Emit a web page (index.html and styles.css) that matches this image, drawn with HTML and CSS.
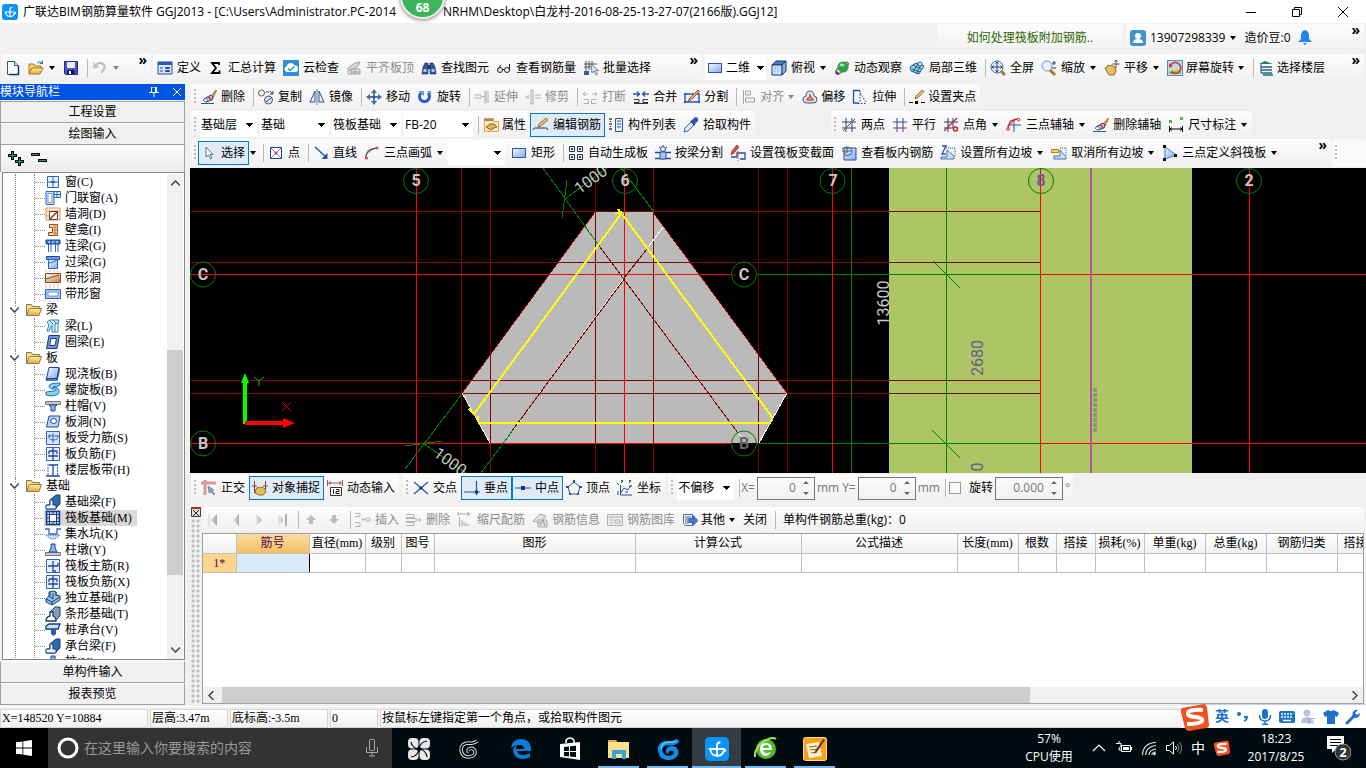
FILE: index.html
```html
<!DOCTYPE html>
<html lang="zh-CN">
	<head>
		<meta charset="UTF-8">
		<meta name="viewport" content="width=device-width, initial-scale=1.0">
		<title>广联达BIM钢筋算量软件 GGJ2013</title>
		<link rel="stylesheet" href="styles.css">
	</head>
	<body>

		<!-- icon sprite -->
		<svg class="sprite" aria-hidden="true">
			<defs>
				<linearGradient id="gBlue" x1="0" y1="0" x2="1" y2="1"><stop offset="0" stop-color="#f4f9ff"/><stop offset="1" stop-color="#7fa8ee"/></linearGradient>
				<linearGradient id="gFolder" x1="0" y1="0" x2="0" y2="1"><stop offset="0" stop-color="#fff0b0"/><stop offset="1" stop-color="#e9a92c"/></linearGradient>
				<linearGradient id="gBrown" x1="0" y1="0" x2="1" y2="1"><stop offset="0" stop-color="#fff"/><stop offset="1" stop-color="#c47a3c"/></linearGradient>
				<linearGradient id="gGrey" x1="0" y1="0" x2="1" y2="0"><stop offset="0" stop-color="#e8e8e8"/><stop offset="1" stop-color="#a8a8a8"/></linearGradient>
			</defs>

			<symbol id="logo" viewBox="0 0 16 16"><rect width="16" height="16" rx="3" fill="#0b93f5"/><path d="M8 12.500V5.500q0-2 2.300-2M2.500 8h9.500q2 0 1.200 2M3.500 8q.5 4.500 4.500 4.500t4.500-3.500" fill="none" stroke="#fff" stroke-width="1.200"/></symbol>
			<symbol id="new" viewBox="0 0 16 16"><path d="M2.500 1.500h7l4 4v9h-11z" fill="#fff" stroke="#2b5797"/><path d="M9.500 1.500v4h4" fill="#cfe0fb" stroke="#2b5797"/><path d="M13.500 6v8.500H4" fill="none" stroke="#12365f" stroke-width="1.500"/></symbol>
			<symbol id="open" viewBox="0 0 16 16"><path d="M1 14V4h5l1 2h6v3" fill="#f7d36f" stroke="#a8741c"/><path d="M1 14l3-6h11l-3 6z" fill="url(#gFolder)" stroke="#a8741c"/><path d="M9 3q3-3 5 0M14.500 .5v3h-3" fill="none" stroke="#3b6ea5"/></symbol>
			<symbol id="save" viewBox="0 0 16 16"><path d="M1.500 1.500h13v13h-12l-1-1z" fill="#4a55c8" stroke="#232a86"/><path d="M4 2h8v6H4z" fill="#e9edff"/><path d="M4.500 10h7v4h-7z" fill="#16184a"/><path d="M6 11h2v3H6z" fill="#fff"/></symbol>
			<symbol id="undo" viewBox="0 0 16 16"><path d="M3 6q4-5 8-2t-2 9" fill="none" stroke="#bdbdbd" stroke-width="2.200"/><path d="M1 2l.5 7 6-2z" fill="#c4c4c4"/></symbol>
			<symbol id="define" viewBox="0 0 16 16"><path d="M1 2h14v12H1z" fill="#dce8fb" stroke="#274b9b"/><path d="M1 2h14v3H1z" fill="#2c55b5"/><path d="M3 8h3M3 11h3M8.500 7.500h4v1h-4zM8.500 10.500h4v1h-4z" fill="none" stroke="#274b9b"/></symbol>
			<symbol id="sigma" viewBox="0 0 16 16"><path d="M11 5V3H4l4 5-4 5h7.500v-2.500" fill="none" stroke="#000" stroke-width="1.800"/></symbol>
			<symbol id="cloud" viewBox="0 0 16 16"><rect width="16" height="16" rx="1" fill="#2d8fd6"/><path d="M4 12a3 3 0 0 1-.3-5.800 4 4 0 0 1 7.500-1A3.400 3.400 0 0 1 12 12z" fill="#fff"/><path d="M5 8.500l2.300 2 4-4" fill="none" stroke="#2d8fd6" stroke-width="1.500"/></symbol>
			<symbol id="level" viewBox="0 0 16 16"><path d="M2 8l7-5 5-1-2 4-8 5z" fill="#d8d8d8" stroke="#a2a2a2"/><path d="M2 14V9m3 5V9h9v5H2m3-2h9M9 9v5" fill="#dadada" stroke="#a2a2a2"/></symbol>
			<symbol id="find" viewBox="0 0 16 16"><path d="M1 14l1-7 2-4h3v11zM9 14V3h3l2 4 1 7z" fill="#2e5596" stroke="#17305f" stroke-width=".6"/><path d="M7 5h2v4H7z" fill="#17305f"/><path d="M2.500 9h3v3h-3zM10.500 9h3v3h-3z" fill="#a9c7f2"/></symbol>
			<symbol id="glasses" viewBox="0 0 16 16"><circle cx="4" cy="10" r="2.500" fill="none" stroke="#222"/><circle cx="11" cy="10" r="2.500" fill="none" stroke="#222"/><path d="M6.500 9.500h2M2 9l3-4M13.500 10V4" fill="none" stroke="#222"/></symbol>
			<symbol id="batch" viewBox="0 0 16 16"><path d="M3 1v14M6 1v9M9 1v4M1 4h13M1 7h7" fill="none" stroke="#555"/><path d="M1 11h5v4H1z" fill="#2d5bb5"/><path d="M8 4l1 9 2-2 2 4 1.500-1-2-3.500h3z" fill="#d9e5fa" stroke="#44597f" stroke-width=".7"/></symbol>
			<symbol id="rect" viewBox="0 0 16 16"><rect x="1.500" y="3.500" width="13" height="9" fill="url(#gBlue)" stroke="#3456a4"/></symbol>
			<symbol id="cube" viewBox="0 0 16 16"><path d="M1 5l4-4h10l-4 4z" fill="#4d7fbf" stroke="#123b66"/><path d="M1 5h10v10H1z" fill="#dbe9fb" stroke="#123b66"/><path d="M11 5l4-4v10l-4 4z" fill="#8db1de" stroke="#123b66"/><path d="M4 5v10M7 5v10M1 8h10M1 11h10" stroke="#86aee0" stroke-width=".6"/></symbol>
			<symbol id="orbit" viewBox="0 0 16 16"><ellipse cx="8" cy="8" rx="8" ry="3" transform="rotate(-42 8 8)" fill="none" stroke="#c23b2b"/><circle cx="9" cy="7" r="5.500" fill="#2fa04e"/><ellipse cx="8" cy="5" rx="2.500" ry="1.600" fill="#a5e6b5"/><path d="M1 12l2 3 3-1-3-3z" fill="#2a52a3"/></symbol>
			<symbol id="local3d" viewBox="0 0 16 16"><path d="M1 7l6-4 8 3-5 8-8-3z" fill="#9ccbe6" stroke="#1d5c86"/><path d="M4 5l8 4M3 9l8 3M9 4l-5 8M12 5l-5 9" fill="none" stroke="#1d5c86"/><circle cx="11" cy="4" r="2" fill="#dff1fb" stroke="#1d5c86"/></symbol>
			<symbol id="full" viewBox="0 0 16 16"><path d="M11 11l4 4" stroke="#b07727" stroke-width="3"/><circle cx="7" cy="7" r="6" fill="#e6effb" stroke="#3b5f9b"/><path d="M7 2v10M2 7h10M5.500 3.500L7 2l1.500 1.500M5.500 10.500L7 12l1.500-1.500M3.500 5.500L2 7l1.500 1.500M10.500 5.500L12 7l-1.500 1.500" fill="none" stroke="#24417a"/></symbol>
			<symbol id="zoom" viewBox="0 0 16 16"><path d="M9 10l5 5" stroke="#b07727" stroke-width="3"/><circle cx="6" cy="6" r="5" fill="#e9f2fc" stroke="#7b94b8"/><path d="M11 3h4M13 1v4M11 8h4" stroke="#24417a"/></symbol>
			<symbol id="pan" viewBox="0 0 16 16"><path d="M1 8l2-1 1-2 2 1 2-1 1 1.500 2 .5 1 4-2 4H5z" fill="#eabf62" stroke="#8c6a25"/><path d="M12 0v8M8.500 4h7M10.500 1.500L12 0l1.500 1.500" fill="none" stroke="#555"/></symbol>
			<symbol id="screenrot" viewBox="0 0 16 16"><rect x=".5" y=".5" width="15" height="15" fill="#b9def2" stroke="#4c94bd"/><path d="M2 12q4-5 12-1v3H2z" fill="#8dc653"/><path d="M3 6q4-6 9-2 4 5-1 9-4 1-7-1" fill="none" stroke="#e0312b" stroke-width="1.600"/><path d="M2 8V3l4 3z" fill="#e0312b"/><path d="M6 8h4v3H6z" fill="#f3d65f"/></symbol>
			<symbol id="floor" viewBox="0 0 16 16"><path d="M1 4l6-3 8 3z" fill="#2c7f5e"/><path d="M3 7h11M3 10h11M3 13h11M5 15h10" stroke="#1d6f84" stroke-width="1.500"/><path d="M3 4v9" stroke="#24417a"/></symbol>

			<symbol id="erase" viewBox="0 0 16 16"><path d="M0 14.500h13" stroke="#1f5f7a"/><path d="M15 1l-5 6 2 2 3.500-7z" fill="#e0a54b" stroke="#8a5a1a" stroke-width=".7"/><path d="M10 6L3 10l2 3 6-2 1-3z" fill="#b8cbe9" stroke="#24417a"/><path d="M5 9l-3 2 2 2 3-1z" fill="#fff" stroke="#24417a" stroke-width=".7"/><path d="M7 7l3 4" stroke="#c23b2b" stroke-width="1.500"/></symbol>
			<symbol id="copy" viewBox="0 0 16 16"><circle cx="3.500" cy="4" r="3" fill="#fff" stroke="#555"/><circle cx="10.500" cy="11" r="4" fill="#dfe4ea" stroke="#555"/><path d="M8 13l5-4M8 3h3M12 2l3 3v-3M15 5h-3" fill="none" stroke="#24417a"/></symbol>
			<symbol id="mirror" viewBox="0 0 16 16"><path d="M6 2v11H1zM10 2v11h5z" fill="#eef4ff" stroke="#24519d"/><path d="M8 0v16" stroke="#777"/></symbol>
			<symbol id="move" viewBox="0 0 16 16"><path d="M8 2v12M2 8h12" stroke="#24417a" stroke-width="1.400"/><path d="M8 0L5 4h6zM8 16l-3-4h6zM0 8l4-3v6zM16 8l-4-3v6z" fill="#4a6aa5"/></symbol>
			<symbol id="rotate" viewBox="0 0 16 16"><path d="M4 4a5 5 0 1 0 7 0" fill="none" stroke="#2d5fc4" stroke-width="3"/><path d="M1 2h6v5zM10 2h4v4z" fill="#6d98e6"/></symbol>
			<symbol id="extend" viewBox="0 0 16 16"><path d="M0 6h7v3H0M8 7.500h3M11 2h1v12h-1zM14 2v12" fill="none" stroke="#b0b0b0"/></symbol>
			<symbol id="trim" viewBox="0 0 16 16"><path d="M0 8h4M10 6h6M10 9h6M6 1h2v14H6zM3 6v4" fill="none" stroke="#b0b0b0"/></symbol>
			<symbol id="break" viewBox="0 0 16 16"><path d="M1 5h5M10 5h5M3 3L1 5l2 2M13 3l2 2-2 2M1.500 10.500h5v4h-5M14.500 10.500h-5v4h5" fill="none" stroke="#b0b0b0"/></symbol>
			<symbol id="merge" viewBox="0 0 16 16"><path d="M0 5h6M10 5h6M4 2.500L6.500 5 4 7.500M12 2.500L9.500 5 12 7.500" fill="none" stroke="#2850c0" stroke-width="1.300"/><path d="M1 10.500h5v3H1M15 10.500h-5v3h5M1 14.500h14" fill="none" stroke="#333"/></symbol>
			<symbol id="split" viewBox="0 0 16 16"><path d="M1 5h14v8H1z" fill="#e9f0ff" stroke="#2850c0" stroke-width="1.400"/><path d="M0 4h2v2H0zM0 12h2v2H0zM14 12h2v2h-2z" fill="#2850c0"/><path d="M4 12l2-3 8-8 1.500 1.500-8 8z" fill="#e8b35a" stroke="#8a2f1a" stroke-width=".8"/></symbol>
			<symbol id="align" viewBox="0 0 16 16"><path d="M2.500 1v14M4.500 2h5v4h-5zM4.500 9h9v4h-9z" fill="#eee" stroke="#a5a5a5"/></symbol>
			<symbol id="offset" viewBox="0 0 16 16"><path d="M1 11q0-4 3-4 0-5 4-5t4 5q3 0 3 4 0 3-4 3H5q-4 0-4-3z" fill="#dce5f2" stroke="#3c587d"/><path d="M5 11q0-2 2-2l1-3 1 3q2 0 2 2z" fill="#fff" stroke="#d34a35" stroke-width="1.300"/></symbol>
			<symbol id="stretch" viewBox="0 0 16 16"><path d="M8 1.500H1.500v12.500h5" fill="none" stroke="#24519d" stroke-width="1.300"/><path d="M8 2v12M6 14.500h9M8 4l6 9" fill="none" stroke="#24417a" stroke-dasharray="1.500 1.500"/></symbol>
			<symbol id="grippt" viewBox="0 0 16 16"><path d="M0 13.500h4M12 13.500h4" stroke="#000"/><path d="M6 12h3v3H6z"/><path d="M6 10l1-3 6-6 2 1.500-6 6z" fill="#e8c074" stroke="#7a5a22" stroke-width=".8"/></symbol>

			<symbol id="prop" viewBox="0 0 16 16"><path d="M1.500 1.500h9v3h5v10h-14z" fill="#ffe9bd" stroke="#f0983a"/><path d="M1 2h9v2H1z" fill="#8a8a8a"/><path d="M3 10l4-3 4 0 3 3-3 1-3 2z" fill="#e0b84e" stroke="#5f4b18" stroke-width=".8"/></symbol>
			<symbol id="editbar" viewBox="0 0 16 16"><path d="M0 13q1-3 3-2h9q2-1 3 2" fill="none" stroke="#333"/><path d="M5 10l1-3 7-6 2 2-7 6z" fill="#e8c074" stroke="#7a5a22" stroke-width=".8"/></symbol>
			<symbol id="list" viewBox="0 0 16 16"><path d="M1 2h3M1 7h3M1 12h3M2.500 4v1M2.500 9v1" stroke="#444" stroke-width="1.500"/><path d="M7.500 1.500h7v13h-7z" fill="#e6effd" stroke="#2b5797"/><path d="M9 4h4M9 7h4M9 10h4" stroke="#2b5797"/></symbol>
			<symbol id="pick" viewBox="0 0 16 16"><path d="M1 15l1-4 6-6 3 3-6 6z" fill="#dfeaf8" stroke="#355d94"/><path d="M7 4l2-1 3-3q4 0 3 4l-3 3 0 2z" fill="#2a5cae"/></symbol>
			<symbol id="twopt" viewBox="0 0 16 16"><path d="M5 1v14M11 1v14M1 5h14M1 11h14" stroke="#24417a"/><path d="M2 14L14 2" stroke="#b02a2a"/><path d="M4 10h2v2H4zM10 4h2v2h-2z" fill="#3d9b3d"/></symbol>
			<symbol id="parallel" viewBox="0 0 16 16"><path d="M5 1v14M11 1v14M1 5h14" stroke="#24519d"/><path d="M1 11h14" stroke="#b02a2a"/></symbol>
			<symbol id="ptangle" viewBox="0 0 16 16"><path d="M5 1v14M10 1v10M1 5h14M1 11h10" stroke="#24417a"/><path d="M1 14L14 1" stroke="#d02020" stroke-width="1.300"/><circle cx="12.500" cy="12" r="2" fill="none" stroke="#d02020" stroke-width="1.500"/></symbol>
			<symbol id="threeaxis" viewBox="0 0 16 16"><path d="M8 3v12M3 8h12" stroke="#24519d"/><path d="M2 12q0-9 10-10" fill="none" stroke="#d02020" stroke-width="1.300"/><circle cx="2" cy="12" r="1.300" fill="#fff" stroke="#d02020"/><circle cx="12.500" cy="2.500" r="1.300" fill="#fff" stroke="#d02020"/><circle cx="5" cy="5" r="1.300" fill="#fff" stroke="#d02020"/></symbol>
			<symbol id="dim" viewBox="0 0 16 16"><path d="M1 3h3v3H1zM12 0h3v3h-3z" fill="#49b856"/><path d="M1.500 9v6M14.500 9v6M2 12h12M4 10.500L2 12l2 1.500M12 10.500l2 1.500-2 1.500" fill="none" stroke="#000"/></symbol>

			<symbol id="arrowsel" viewBox="0 0 16 16"><path d="M5 2v10l2.500-2 2 4 1.500-1-2-3.500h3z" fill="#fff" stroke="#5b6f8d"/></symbol>
			<symbol id="point" viewBox="0 0 16 16"><path d="M2.500 2.500h11v11h-11z" fill="#fff" stroke="#24417a"/><path d="M3 3l10 10M13 3L3 13" stroke="#6a86c8"/><circle cx="8" cy="8" r="1.500" fill="#d33"/></symbol>
			<symbol id="line" viewBox="0 0 16 16"><path d="M2 2l11 10" stroke="#24519d" stroke-width="1.400"/><path d="M14.500 8v6H8.500z" fill="#24519d"/></symbol>
			<symbol id="arc" viewBox="0 0 16 16"><path d="M2 14Q1 4 14 3" fill="none" stroke="#24519d" stroke-width="1.300"/><circle cx="2.500" cy="13" r="1.500" fill="#d5533c"/><circle cx="5" cy="6" r="1.500" fill="#d5533c"/><circle cx="13" cy="3" r="1.500" fill="#d5533c"/></symbol>
			<symbol id="autoslab" viewBox="0 0 16 16"><path d="M1.500 1.500h5v5h-5zM9.500 1.500h5v5h-5zM1.500 9.500h5v5h-5zM9.500 9.500h5v5h-5z" fill="#dfeaff" stroke="#333"/><path d="M3 3h2v2H3zM11 3h2v2h-2zM3 11h2v2H3zM11 11h2v2h-2z" fill="#24519d"/></symbol>
			<symbol id="beamsplit" viewBox="0 0 16 16"><path d="M0 7.500h16M0 13.500h16" stroke="#24519d" stroke-width="1.500"/><path d="M5 7h6v7H5z" fill="#a9c5f2" stroke="#24519d"/><circle cx="8" cy="4" r="2.500" fill="#e6effd" stroke="#24519d"/><path d="M8 0v1M4 2l1 1M12 2l-1 1" stroke="#24519d"/></symbol>
			<symbol id="section" viewBox="0 0 16 16"><path d="M1 12h6V8h8v6h-5" fill="#eef3ff" stroke="#24519d" stroke-width="1.300"/><path d="M1 10l1-4 5-6 2 2-5 6z" fill="#dd5540" stroke="#7c1f12" stroke-width=".7"/><path d="M8 6v10" stroke="#d33" stroke-dasharray="2 1"/></symbol>
			<symbol id="viewbar" viewBox="0 0 16 16"><path d="M3 3h12v12H3z" fill="url(#gBlue)" stroke="#24519d"/><path d="M1 4q6-4 9 0t-2 6-4-3M6 2v6M1 6h9" fill="none" stroke="#3c587d"/></symbol>
			<symbol id="slope" viewBox="0 0 16 16"><path d="M2 1h4L2 9h4" fill="none" stroke="#24519d" stroke-width="1.300"/><path d="M6 3h9v8" fill="none" stroke="#24519d" stroke-dasharray="1 1"/><path d="M7 5l7 6v3H1v-2h6z" fill="#cfe0fb" stroke="#24519d" stroke-width=".8"/></symbol>
			<symbol id="slopeoff" viewBox="0 0 16 16"><path d="M.5 4.500h7v3h-7z" fill="#f6d64c" stroke="#a8861c"/><path d="M9 3h6v8" fill="none" stroke="#24519d" stroke-dasharray="1 1"/><path d="M9 5l6 7v2H3v-3h6z" fill="#cfe0fb" stroke="#24519d" stroke-width=".8"/></symbol>
			<symbol id="tiltraft" viewBox="0 0 16 16"><path d="M3 2v12l11-4z" fill="url(#gBlue)" stroke="#3f74d1"/><path d="M1 0h3v3H1zM1 13h3v3H1zM12 9h3v3h-3z" fill="#111"/></symbol>

			<symbol id="ortho" viewBox="0 0 16 16"><path d="M0 3h15M4 0v15" stroke="#d79a9a" stroke-width="3"/><path d="M7 6l6 4-2 1 3 3-1 1-3-3-2 1z" fill="#8ca0b8" stroke="#5f7288" stroke-width=".6"/></symbol>
			<symbol id="osnap" viewBox="0 0 16 16"><path d="M2.500 1v12M13.500 1v8M0 6h5M11 6h5" stroke="#8b3a3a"/><path d="M4 9l2-2 2 1 2-1 3 2 1 3-3 3H7l-4-2z" fill="#e7bd62" stroke="#8c6a25"/></symbol>
			<symbol id="dyn" viewBox="0 0 16 16"><path d="M.5 0v6M15.500 0v6M1 3h14M3 1v4M13 1v4" stroke="#9b5a5a"/><path d="M3.500 7.500h11v8h-11z" fill="#fff" stroke="#333"/><path d="M6.500 9v5M9 9.500h3v2H9v2h3.500" fill="none" stroke="#222"/></symbol>
			<symbol id="cross" viewBox="0 0 16 16"><path d="M1 2l14 12M15 2L1 14" stroke="#24519d" stroke-width="1.200"/><path d="M6.500 6.500h3v3h-3z" fill="#113a86"/></symbol>
			<symbol id="perp" viewBox="0 0 16 16"><path d="M0 12h16M12.500 1v14" stroke="#24519d" stroke-width="1.200"/><path d="M11 10.500h3v3h-3z" fill="#113a86"/></symbol>
			<symbol id="mid" viewBox="0 0 16 16"><path d="M0 8h16" stroke="#24519d"/><path d="M6 6h4v4H6z" fill="#113a86"/></symbol>
			<symbol id="vertex" viewBox="0 0 16 16"><path d="M8 2l6 5-2 7H4L2 7z" fill="none" stroke="#24519d"/><path d="M7 0h2v3H7zM0 6h3v2H0zM13 6h3v2h-3zM3 13h2v2H3zM11 13h2v2h-2z" fill="#24519d"/></symbol>
			<symbol id="coord" viewBox="0 0 16 16"><path d="M3.500 5v10H15M3 14l4-6 4 2 3-5" fill="none" stroke="#24519d"/><path d="M0 3l2 2M4 0l2 2M6 0L4 3M12 0l2 2M14 0l-2 3M1 11v4M12 6h3M8 12h3" stroke="#333" stroke-width=".9"/></symbol>

			<symbol id="first" viewBox="0 0 16 16"><path d="M3 2h2v12H3zM12 2v12L6 8z" fill="url(#gGrey)"/></symbol>
			<symbol id="prev" viewBox="0 0 16 16"><path d="M11 2v12L5 8z" fill="url(#gGrey)"/></symbol>
			<symbol id="next" viewBox="0 0 16 16"><path d="M5 2v12l6-6z" fill="url(#gGrey)"/></symbol>
			<symbol id="last" viewBox="0 0 16 16"><path d="M11 2h2v12h-2zM4 2v12l6-6z" fill="url(#gGrey)"/></symbol>
			<symbol id="up" viewBox="0 0 16 16"><path d="M8 3l5 5h-3v4H6V8H3z" fill="#bdbdbd"/></symbol>
			<symbol id="down" viewBox="0 0 16 16"><path d="M8 12L3 7h3V3h4v4h3z" fill="#bdbdbd"/></symbol>
			<symbol id="insrow" viewBox="0 0 16 16"><path d="M0 1.500h5v3H0M0 10.500h5v4H0M7 7.500h4M9 5.500l-2 2 2 2M11 6h4v3h-4z" fill="none" stroke="#b5b5b5"/></symbol>
			<symbol id="delrow" viewBox="0 0 16 16"><path d="M0 2.500h8v3H0M0 6.500h10v3H0M0 10.500h8v3H0M10 8h5M13 6l2 2-2 2" fill="none" stroke="#b5b5b5"/></symbol>
			<symbol id="scale" viewBox="0 0 16 16"><path d="M1 2h11M1 0v4M10 0l3 2-3 2M2.500 5v10M5 8v6M7 10v4M9 11v3M11 12v2" fill="none" stroke="#aaa"/></symbol>
			<symbol id="info" viewBox="0 0 16 16"><path d="M1 9l7-7 6 2-6 7zM6 8h9v7H6z" fill="#e2e2e2" stroke="#aaa"/><path d="M8 14l3-6 2 6" fill="none" stroke="#999"/></symbol>
			<symbol id="lib" viewBox="0 0 16 16"><path d="M.5 2.500h15v11H.5zM.5 5h15" fill="#ececec" stroke="#b0b0b0"/><path d="M3 8h3M8 8h5v3H8zM3 11h3" fill="none" stroke="#b0b0b0"/></symbol>
			<symbol id="other" viewBox="0 0 16 16"><path d="M1.500 2.500h9v11h-7l-2-2z" fill="#edf3fd" stroke="#54698c"/><path d="M3 5h6M3 7h5M3 9h4M3 11h4" stroke="#54698c"/><path d="M7 6.500h4V3.500l5 5-5 5v-3H7z" fill="#3e7be0" stroke="#1f4ca0" stroke-width=".7"/></symbol>

			<symbol id="folder" viewBox="0 0 16 16"><path d="M.5 13.500v-11h5l1 2h7v3" fill="#f6dc8b" stroke="#8c7a4a"/><path d="M.5 13.500l3-7h12l-2.500 7z" fill="url(#gFolder)" stroke="#8c7a4a"/></symbol>
			<symbol id="t-window" viewBox="0 0 16 16"><path d="M2.500 2.500h11v11h-11z" fill="#e6f0ff" stroke="#2f63c0"/><path d="M8 2v12M2 8h12" stroke="#2f63c0"/><path d="M6 7h4v2H6z" fill="#2f63c0"/></symbol>
			<symbol id="t-doorwin" viewBox="0 0 16 16"><path d="M1 1.500h8v13H1z" fill="#cfe0fb" stroke="#2f63c0"/><path d="M3 3.500h4v9H3z" fill="#fff" stroke="#6d98e6"/><path d="M9 1.500h6.500v6H9zM12 2v6M9 4.500h6" fill="#e6f0ff" stroke="#2f63c0"/></symbol>
			<symbol id="t-wallhole" viewBox="0 0 16 16"><path d="M1 2h14v12H1z" fill="#fdf0e4" stroke="#e2935a"/><path d="M1 5h14M1 10h3" stroke="#e2935a"/><path d="M4.500 5.500h8v8h-8z" fill="#fff" stroke="#6b3c16"/><path d="M5 13l7-7" stroke="#6b3c16" stroke-width="1.400"/></symbol>
			<symbol id="t-niche" viewBox="0 0 16 16"><path d="M4.500 2.500h8v11h-9v-3h4v-5h-3z" fill="#fbd9b8" stroke="#8a4a1a"/><path d="M8 5h5M8 8h5M8 11h5M10 2v12" stroke="#c2763c"/></symbol>
			<symbol id="t-linkbeam" viewBox="0 0 16 16"><path d="M1 2h14v4H1z" fill="#3e70cb" stroke="#1c469c"/><path d="M3.500 6v8M6 6v8M10.500 6v8M13 6v8" stroke="#2f63c0"/><path d="M3 4h2M7 4h2M11 4h2" stroke="#fff"/></symbol>
			<symbol id="t-lintel" viewBox="0 0 16 16"><path d="M1.500 2.500h13v3h-13z" fill="#6d98e6" stroke="#1c469c"/><path d="M3.500 5.500h9v9h-9z" fill="url(#gBlue)" stroke="#2f63c0"/><path d="M4 9l4-1 4-2" stroke="#2f63c0" fill="none"/></symbol>
			<symbol id="t-striphole" viewBox="0 0 16 16"><path d="M.5 3.500h15v9H.5z" fill="url(#gBrown)" stroke="#8a4a1a"/><path d="M1 9l13-4" stroke="#8a4a1a"/><path d="M0 1h16M0 15h16" stroke="#f3b6b6" stroke-dasharray="2 2"/></symbol>
			<symbol id="t-stripwin" viewBox="0 0 16 16"><path d="M.5 3.500h15v9H.5z" fill="#a9c5f2" stroke="#2f63c0"/><path d="M3 6h10v4H3z" fill="#fff" stroke="#6d98e6"/><path d="M0 1h16M0 15h16" stroke="#f3b6b6" stroke-dasharray="2 2"/></symbol>
			<symbol id="t-beam" viewBox="0 0 16 16"><path d="M2 4l3-2h9l-1 3-3 1v8H7V7l-3 6H2l2-6z" fill="#d5e9fb" stroke="#2786bf"/><path d="M5 3l3 3M8 2l3 3M13 5v9h-3" fill="none" stroke="#2786bf"/></symbol>
			<symbol id="t-ring" viewBox="0 0 16 16"><path d="M4 1.500h10.500l-2.500 13H1.500z" fill="#6f97dd" stroke="#143a84"/><path d="M6 4.500h5.500L10 11.500H4.500z" fill="#fff" stroke="#143a84"/></symbol>
			<symbol id="t-slab" viewBox="0 0 16 16"><path d="M4 1.500h10l-2 11H1.500z" fill="url(#gBlue)" stroke="#1c469c"/><path d="M14 2v3l-2 9H1.500v-2" fill="none" stroke="#1c469c" stroke-width="1.400"/></symbol>
			<symbol id="t-spiral" viewBox="0 0 16 16"><path d="M15 1q-11 0-11 3t5 3 0 2L1 10v3q5 2 10 0t2-6-5-2 7-2z" fill="#8ed0f2" stroke="#1c6fb0"/></symbol>
			<symbol id="t-cap" viewBox="0 0 16 16"><path d="M.5 3.500h15v3H.5z" fill="#c8c8c8" stroke="#777"/><path d="M4 7h8l-2 2v4H6V9z" fill="#8db1e8" stroke="#1c469c"/></symbol>
			<symbol id="t-slabhole" viewBox="0 0 16 16"><path d="M4 2h11l-2 11H1.500z" fill="#bcd5f8" stroke="#1c469c"/><ellipse cx="8.500" cy="7" rx="3" ry="2.500" fill="#fff" stroke="#1c469c"/></symbol>
			<symbol id="t-stressbar" viewBox="0 0 16 16"><path d="M1.500 1.500h13v13h-13z" fill="#dbe8fb" stroke="#2f63c0"/><path d="M8 3v10M3 6h10M5 4q-3 6 3 6t5-5" fill="none" stroke="#2f63c0"/></symbol>
			<symbol id="t-negbar" viewBox="0 0 16 16"><path d="M1.500 1.500h13v13h-13z" fill="#eaf2ff" stroke="#2f63c0"/><path d="M4 5h8M3 10h10M8 2v12M4 5v3M12 5v3" fill="none" stroke="#1c469c" stroke-width="1.300"/></symbol>
			<symbol id="t-strip" viewBox="0 0 16 16"><path d="M1 14h14M4 3h9M8 3v11" stroke="#1c469c" stroke-width="1.300"/><path d="M3 2v12M12.500 2v12" stroke="#2f63c0" stroke-dasharray="2 1"/></symbol>
			<symbol id="t-fbeam" viewBox="0 0 16 16"><path d="M1 15l1-4h3V6l6-5h4v9l-5 5z" fill="#2c6aa8" stroke="#123f74"/><path d="M5 6h3v5h3v4H1v-4h4z" fill="#e6f1ff" stroke="#123f74"/></symbol>
			<symbol id="t-raft" viewBox="0 0 16 16"><path d="M1.500 1.500h13v13h-13z" fill="#cfe0fb" stroke="#123a84" stroke-width="1.500"/><path d="M4.500 4.500h7v7h-7z" fill="#fff" stroke="#123a84"/><path d="M4.500 1v14M11.500 1v14M1 4.500h14M1 11.500h14M8 2v3M8 11v3M2 8h3M11 8h3" stroke="#123a84"/></symbol>
			<symbol id="t-pit" viewBox="0 0 16 16"><path d="M0 3h4v5h8V3h4" fill="none" stroke="#2f63c0" stroke-width="1.300"/><path d="M1 9q7 8 14 0z" fill="#cfe0fb" stroke="#2f63c0" stroke-dasharray="1.500 1"/></symbol>
			<symbol id="t-pier" viewBox="0 0 16 16"><path d="M.5 10.500h15v3H.5z" fill="#c8c8c8" stroke="#777"/><path d="M6 2h4v4l2 4H4l2-4z" fill="#8db1e8" stroke="#1c469c"/></symbol>
			<symbol id="t-mainbar" viewBox="0 0 16 16"><path d="M1.500 1.500h13v13h-13z" fill="#eaf2ff" stroke="#2f63c0"/><path d="M8 3v10h3M3 8h10V5" fill="none" stroke="#1c469c" stroke-width="1.300"/></symbol>
			<symbol id="t-indep" viewBox="0 0 16 16"><path d="M1 9l3-3V2l4-1 3 1v3l4 1v4l-8 5-6-3z" fill="#9cc2e6" stroke="#123f74"/><path d="M1 9l6 3 8-5M7 12v3M5 2v5l3 2V3M11 2v4" fill="none" stroke="#123f74"/></symbol>
			<symbol id="t-stripf" viewBox="0 0 16 16"><path d="M5 6l5-5h5v9l-5 5z" fill="#8a9fb5" stroke="#123f74"/><path d="M5 6h3v4q3 1 3 5H1q0-4 4-5z" fill="#fff" stroke="#123f74" stroke-width="1.300"/></symbol>
			<symbol id="t-pilecap" viewBox="0 0 16 16"><path d="M1 4l3-2h11l-2 5H1z" fill="#cfe0fb" stroke="#123f74" stroke-width="1.300"/><path d="M6 7h5v5l-2.500 2L6 12z" fill="#2b5ea8"/></symbol>

			<symbol id="win" viewBox="0 0 16 16"><path d="M0 2.300L6.500 1.400v6.200H0zM7.300 1.300L16 0v7.600H7.300zM0 8.400h6.500v6.200L0 13.700zM7.300 8.400H16V16l-8.700-1.300z" fill="#fff"/></symbol>
			<symbol id="petals" viewBox="0 0 24 24"><rect x="1" y="1" width="10.500" height="10.500" rx="4" fill="#e8e8e8"/><rect x="12.500" y="1" width="10.500" height="10.500" rx="4" fill="#e8e8e8"/><rect x="1" y="12.500" width="10.500" height="10.500" rx="4" fill="#e8e8e8"/><rect x="12.500" y="12.500" width="10.500" height="10.500" rx="4" fill="#e8e8e8"/><path d="M12 12Q5 11 4 5M12 12q1-7 8-8M12 12q7 1 8 8M12 12q-1 7-8 8" fill="none" stroke="#000c10" stroke-width="1.200"/></symbol>
			<symbol id="gline" viewBox="0 0 24 24"><path d="M21 4q-3 3-8 2-8 0-8 7 1 7 8 7 7-1 6-6-2-4-6-2-2 2 0 3" fill="none" stroke="#ddd" stroke-width="3.500"/><path d="M21 4q-3 3-8 2-8 0-8 7 1 7 8 7 7-1 6-6-2-4-6-2-2 2 0 3" fill="none" stroke="#000c10" stroke-width="1.600"/></symbol>
			<symbol id="edge" viewBox="0 0 24 24"><path d="M2 11Q3 2 12 2q9 0 10 9v3H8q1 4 6 4 4 0 7-2v4q-3 2-8 2-8-1-9-8 0-4 4-6-1 2-1 4h8q0-4-4-4-6 0-9 3z" fill="#0c7cd9"/></symbol>
			<symbol id="store" viewBox="0 0 24 24"><path d="M2 7l20-2v18L2 20z" fill="#fff"/><path d="M8 6V3q4-4 8 0v3" fill="none" stroke="#fff" stroke-width="1.500"/><path d="M6 10l5-.5V14H6zM12 9.300l6-.5V14h-6zM6 15h5v4.500l-5-.5zM12 15h6v5l-6-.5z" fill="#000d10"/></symbol>
			<symbol id="explorer" viewBox="0 0 24 24"><path d="M1 3h8l1 2h12v16H1z" fill="#fbe08a"/><path d="M1 3h8l1 2H1z" fill="#e5ac35"/><path d="M5 22v-9h14v9h-4v-5H9v5z" fill="#35a3df"/></symbol>
			<symbol id="gblue" viewBox="0 0 24 24"><path d="M22 3q-3 4-9 3-9 0-9 7 1 8 9 8 8-1 7-7-2-4-7-2-2 2 0 3" fill="none" stroke="#128ae6" stroke-width="4.500"/><path d="M20 4q-4 2-9 1-6 2-6 7" fill="none" stroke="#5cc2ff" stroke-width="1.500"/></symbol>
			<symbol id="egreen" viewBox="0 0 24 24"><circle cx="12" cy="12" r="10" fill="#52b931"/><path d="M6 12q0-6 6-6t6 7H9q1 5 8 2-2 4-6 4-5-1-5-7zm3-1h6q0-3-3-3t-3 3z" fill="#fff"/><path d="M1 20Q0 12 9 5q9-6 13-3" fill="none" stroke="#a6e65c" stroke-width="2"/></symbol>
			<symbol id="notes" viewBox="0 0 24 24"><rect x=".5" y=".5" width="23" height="23" rx="2" fill="#f6a01e" stroke="#ffd98a"/><path d="M3 7l13-2 3 14-13 2z" fill="#fff3cf"/><path d="M6 10l8-1M7 13l8-1M8 16l6-1" stroke="#9a5a20"/><path d="M20 2l2 1-8 12-3 2 1-3z" fill="#7a3512"/></symbol>
			<symbol id="sogou" viewBox="0 0 28 28"><path d="M1 5l22-4q2 0 3 3l2 18q0 3-3 3L8 28q-3 0-4-3L0 9q-1-3 1-4z" fill="#f4511e"/><path d="M22 7Q6 6 7 11q1 3 8 3 7 1 6 4-2 3-15 3" fill="none" stroke="#fff" stroke-width="4"/></symbol>
		</svg>

		<header class="titlebar">
			<svg class="i"><use href="#logo"/></svg>
			<h1><span class="title-start">广联达BIM钢筋算量软件 GGJ2013 - [C:\Users\Administrator.PC-2014</span><span class="ball">68</span><span>NRHM\Desktop\白龙村-2016-08-25-13-27-07(2166版).GGJ12]</span></h1>
			<div class="win-buttons">
				<button aria-label="最小化"><svg width="10" height="10"><path d="M0 5.500h10" stroke="#000"/></svg></button>
				<button aria-label="还原"><svg width="10" height="10"><path d="M.5 2.500h7v7h-7zM2.500 2.500v-2h7v7h-2" fill="none" stroke="#000"/></svg></button>
				<button aria-label="关闭"><svg width="10" height="10"><path d="M0 0l10 10M10 0L0 10" stroke="#000"/></svg></button>
			</div>
		</header>

		<div class="account-row">
			<div class="band tip"><a href="#">如何处理筏板附加钢筋..</a></div>
			<div class="band account">
				<button class="drop"><svg class="i" viewBox="0 0 16 16"><rect width="16" height="16" rx="3" fill="#3f94cc"/><circle cx="8" cy="6" r="3" fill="#fff"/><path d="M3 13q0-4 5-4t5 4z" fill="#fff"/></svg>13907298339</button>
				<button>造价豆:0</button>
				<button aria-label="消息"><svg width="14" height="16" viewBox="0 0 14 16"><path d="M7 0q4 1 4 6v3l3 3H0l3-3V6q0-5 4-6z" fill="#1f86f0"/><path d="M5 13h4l-2 2z" fill="#1f86f0"/></svg></button>
				<span class="more">»</span>
			</div>
		</div>

		<div class="bar-row main-bars">
			<div class="band band-file">
				<button aria-label="新建"><svg class="i"><use href="#new"/></svg></button>
				<button class="drop" aria-label="打开"><svg class="i"><use href="#open"/></svg></button>
				<button aria-label="保存"><svg class="i"><use href="#save"/></svg></button>
				<i class="sep"></i>
				<button class="drop off" aria-label="撤销"><svg class="i"><use href="#undo"/></svg></button>
				<span class="more">»</span>
			</div>
			<div class="band band-calc">
				<button><svg class="i"><use href="#define"/></svg>定义</button>
				<button><svg class="i"><use href="#sigma"/></svg>汇总计算</button>
				<button><svg class="i"><use href="#cloud"/></svg>云检查</button>
				<button class="off"><svg class="i"><use href="#level"/></svg>平齐板顶</button>
				<button><svg class="i"><use href="#find"/></svg>查找图元</button>
				<button><svg class="i"><use href="#glasses"/></svg>查看钢筋量</button>
				<button><svg class="i"><use href="#batch"/></svg>批量选择</button>
				<span class="more">»</span>
			</div>
			<div class="band grow">
				<label class="combo"><svg class="i"><use href="#rect"/></svg><select aria-label="视图"><option>二维</option></select></label>
				<button class="drop"><svg class="i"><use href="#cube"/></svg>俯视</button>
				<button><svg class="i"><use href="#orbit"/></svg>动态观察</button>
				<button><svg class="i"><use href="#local3d"/></svg>局部三维</button>
				<i class="sep"></i>
				<button><svg class="i"><use href="#full"/></svg>全屏</button>
				<button class="drop"><svg class="i"><use href="#zoom"/></svg>缩放</button>
				<button class="drop"><svg class="i"><use href="#pan"/></svg>平移</button>
				<button class="drop tight"><svg class="i"><use href="#screenrot"/></svg>屏幕旋转</button>
				<i class="sep"></i>
				<button class="tight"><svg class="i"><use href="#floor"/></svg>选择楼层</button>
				<span class="more">»</span>
			</div>
		</div>

		<div class="work">
			<nav class="modules">
				<h2>模块导航栏
					<svg width="10" height="10"><path d="M2.500 0h5v5.500h-5zM6.500 0v5M0 5.500h10M5 6v4" fill="none" stroke="#fff"/></svg>
					<svg width="8" height="8"><path d="M0 0l8 8M8 0L0 8" stroke="#fff"/></svg>
				</h2>
				<button>工程设置</button>
				<button>绘图输入</button>
				<div class="tree-tools">
					<svg width="39" height="16"><path d="M0 4.500h9M4.500 0v9M7 10.500h9M11.500 6v9" stroke="#000" stroke-width="3"/><path d="M1 4.500h7M4.500 1v7M8 10.500h7M11.500 7v7" stroke="#14a08a"/><path d="M23 3.500h9M30 9.500h9" stroke="#000" stroke-width="3"/><path d="M24 3.500h7M31 9.500h7" stroke="#14a08a"/></svg>
				</div>
				<div class="tree-box">
					<ul class="tree">
						<li>
							<ul>
								<li><svg class="i"><use href="#t-window"/></svg>窗(C)</li>
								<li><svg class="i"><use href="#t-doorwin"/></svg>门联窗(A)</li>
								<li><svg class="i"><use href="#t-wallhole"/></svg>墙洞(D)</li>
								<li><svg class="i"><use href="#t-niche"/></svg>壁龛(I)</li>
								<li><svg class="i"><use href="#t-linkbeam"/></svg>连梁(G)</li>
								<li><svg class="i"><use href="#t-lintel"/></svg>过梁(G)</li>
								<li><svg class="i"><use href="#t-striphole"/></svg>带形洞</li>
								<li><svg class="i"><use href="#t-stripwin"/></svg>带形窗</li>
							</ul>
						</li>
						<li>
							<div class="group"><svg class="chev" width="9" height="6"><path d="M0 .5l4.500 4.500L9 .5" fill="none" stroke="#444" stroke-width="1.500"/></svg><svg class="i"><use href="#folder"/></svg>梁</div>
							<ul>
								<li><svg class="i"><use href="#t-beam"/></svg>梁(L)</li>
								<li><svg class="i"><use href="#t-ring"/></svg>圈梁(E)</li>
							</ul>
						</li>
						<li>
							<div class="group"><svg class="chev" width="9" height="6"><path d="M0 .5l4.500 4.500L9 .5" fill="none" stroke="#444" stroke-width="1.500"/></svg><svg class="i"><use href="#folder"/></svg>板</div>
							<ul>
								<li><svg class="i"><use href="#t-slab"/></svg>现浇板(B)</li>
								<li><svg class="i"><use href="#t-spiral"/></svg>螺旋板(B)</li>
								<li><svg class="i"><use href="#t-cap"/></svg>柱帽(V)</li>
								<li><svg class="i"><use href="#t-slabhole"/></svg>板洞(N)</li>
								<li><svg class="i"><use href="#t-stressbar"/></svg>板受力筋(S)</li>
								<li><svg class="i"><use href="#t-negbar"/></svg>板负筋(F)</li>
								<li><svg class="i"><use href="#t-strip"/></svg>楼层板带(H)</li>
							</ul>
						</li>
						<li>
							<div class="group"><svg class="chev" width="9" height="6"><path d="M0 .5l4.500 4.500L9 .5" fill="none" stroke="#444" stroke-width="1.500"/></svg><svg class="i"><use href="#folder"/></svg>基础</div>
							<ul>
								<li><svg class="i"><use href="#t-fbeam"/></svg>基础梁(F)</li>
								<li><span class="current"><svg class="i"><use href="#t-raft"/></svg>筏板基础(M)</span></li>
								<li><svg class="i"><use href="#t-pit"/></svg>集水坑(K)</li>
								<li><svg class="i"><use href="#t-pier"/></svg>柱墩(Y)</li>
								<li><svg class="i"><use href="#t-mainbar"/></svg>筏板主筋(R)</li>
								<li><svg class="i"><use href="#t-negbar"/></svg>筏板负筋(X)</li>
								<li><svg class="i"><use href="#t-indep"/></svg>独立基础(P)</li>
								<li><svg class="i"><use href="#t-stripf"/></svg>条形基础(T)</li>
								<li><svg class="i"><use href="#t-pilecap"/></svg>桩承台(V)</li>
								<li><svg class="i"><use href="#t-fbeam"/></svg>承台梁(F)</li>
								<li><svg class="i"><use href="#t-pier"/></svg>桩(U)</li>
							</ul>
						</li>
					</ul>
					<div class="vscroll">
						<svg width="9" height="6"><path d="M0 5.500L4.500 1 9 5.500" fill="none" stroke="#444" stroke-width="1.500"/></svg>
						<div class="track"><div class="thumb"></div></div>
						<svg width="9" height="6"><path d="M0 .5L4.500 5 9 .5" fill="none" stroke="#444" stroke-width="1.500"/></svg>
					</div>
				</div>
				<button>单构件输入</button>
				<button>报表预览</button>
			</nav>

			<main>
				<div class="bar-row row-edit">
					<div class="band">
						<i class="grip"></i>
						<button><svg class="i"><use href="#erase"/></svg>删除</button>
						<i class="sep"></i>
						<button><svg class="i"><use href="#copy"/></svg>复制</button>
						<button><svg class="i"><use href="#mirror"/></svg>镜像</button>
						<i class="sep"></i>
						<button><svg class="i"><use href="#move"/></svg>移动</button>
						<button><svg class="i"><use href="#rotate"/></svg>旋转</button>
						<i class="sep"></i>
						<button class="off"><svg class="i"><use href="#extend"/></svg>延伸</button>
						<button class="off"><svg class="i"><use href="#trim"/></svg>修剪</button>
						<i class="sep"></i>
						<button class="off"><svg class="i"><use href="#break"/></svg>打断</button>
						<button><svg class="i"><use href="#merge"/></svg>合并</button>
						<button><svg class="i"><use href="#split"/></svg>分割</button>
						<i class="sep"></i>
						<button class="drop tight off"><svg class="i"><use href="#align"/></svg>对齐</button>
						<button class="tight"><svg class="i"><use href="#offset"/></svg>偏移</button>
						<button><svg class="i"><use href="#stretch"/></svg>拉伸</button>
						<i class="sep"></i>
						<button class="tight"><svg class="i"><use href="#grippt"/></svg>设置夹点</button>
					</div>
				</div>

				<div class="bar-row row-member">
					<div class="band">
						<i class="grip"></i>
						<select class="w-floor" aria-label="楼层"><option>基础层</option></select>
						<select class="w-kind" aria-label="构件类别"><option>基础</option></select>
						<select class="w-kind" aria-label="构件类型"><option>筏板基础</option></select>
						<select class="w-kind" aria-label="构件"><option>FB-20</option></select>
						<i class="sep near"></i>
						<button class="tight"><svg class="i"><use href="#prop"/></svg>属性</button>
						<button class="active"><svg class="i"><use href="#editbar"/></svg>编辑钢筋</button>
						<button><svg class="i"><use href="#list"/></svg>构件列表</button>
						<button><svg class="i"><use href="#pick"/></svg>拾取构件</button>
					</div>
					<div class="band axis">
						<i class="grip"></i>
						<button><svg class="i"><use href="#twopt"/></svg>两点</button>
						<button><svg class="i"><use href="#parallel"/></svg>平行</button>
						<button class="drop"><svg class="i"><use href="#ptangle"/></svg>点角</button>
						<button class="drop"><svg class="i"><use href="#threeaxis"/></svg>三点辅轴</button>
						<button><svg class="i"><use href="#erase"/></svg>删除辅轴</button>
						<button class="drop"><svg class="i"><use href="#dim"/></svg>尺寸标注</button>
					</div>
				</div>

				<div class="bar-row row-draw">
					<div class="band grow">
						<i class="grip"></i>
						<button class="active"><svg class="i"><use href="#arrowsel"/></svg>选择</button>
						<button class="drop only" aria-label="选择方式"></button>
						<i class="sep"></i>
						<button><svg class="i"><use href="#point"/></svg>点</button>
						<i class="sep"></i>
						<button><svg class="i"><use href="#line"/></svg>直线</button>
						<button class="drop"><svg class="i"><use href="#arc"/></svg>三点画弧</button>
						<select class="w-arc" aria-label="画弧参数"><option></option></select>
						<button><svg class="i"><use href="#rect"/></svg>矩形</button>
						<i class="sep"></i>
						<button><svg class="i"><use href="#autoslab"/></svg>自动生成板</button>
						<button><svg class="i"><use href="#beamsplit"/></svg>按梁分割</button>
						<button><svg class="i"><use href="#section"/></svg>设置筏板变截面</button>
						<button><svg class="i"><use href="#viewbar"/></svg>查看板内钢筋</button>
						<button class="drop"><svg class="i"><use href="#slope"/></svg>设置所有边坡</button>
						<button class="drop"><svg class="i"><use href="#slopeoff"/></svg>取消所有边坡</button>
						<button class="drop"><svg class="i"><use href="#tiltraft"/></svg>三点定义斜筏板</button>
						<span class="more">»</span>
					</div>
					<div class="band stub"><i class="grip"></i></div>
				</div>

				<!-- drawing area -->
				<svg class="canvas" viewBox="190 168 1176 305" preserveAspectRatio="xMinYMin slice">
					<rect x="190" y="168" width="1176" height="305" fill="#000"/>
					<rect x="889" y="168" width="303" height="305" fill="#adc564"/>
					<path d="M595 212h58l134 181-28 50H490l-28-50z" fill="#bababa"/>

					<g class="crisp" fill="none">
						<path class="aux" d="M461.500 168v305M490.500 168v305M595.500 168v305M653.500 168v305M758.500 168v305M787.500 168v305M190 211.500h850M190 262.500h850M190 380.500h850M190 393.500h850"/>
						<path class="dimline" d="M851.500 168v305M946.500 168v305M757 274.500h283M757 443.500h283"/>
						<path class="axis-line" d="M416.500 168v305M624.500 168v305M832.500 168v305M1040.500 168v305M1249.500 168v305M190 274.500h541M190 443.500h541M1040 274.500h326M1040 443.500h326"/>
						<path d="M1091 168v305" stroke="#b4559a" stroke-width="2"/>
						<path d="M1095 388v45" stroke="#8c9a72" stroke-width="4" stroke-dasharray="4 1"/>

						<path d="M462 393l28 50M787 393l-28 50M664 226l-18 24M624 278L513 430M737 432l6 6" stroke="#fff"/>
						<path class="aux" d="M595 212L462 393M653 212l134 181M600 247l138 186M647 249L624 278M625 278L512 431"/>
						<path class="dimline" d="M543 168l57 79M621 168l33 44M462 394l-57 75M513 430l-32 43M565 199l42-31M567 180l-5 38M405 446l37-5M424 444l42 29M933 261l27 27M932 430l28 28"/>
					</g>

					<g fill="none" stroke="#ff0" stroke-width="2" class="crisp">
						<path d="M478 423h293M621 214L474 414l-5-5M622 214l150 203M615 214l7-2M618 209l4 6M478 416v6M772 416v5"/>
					</g>

					<g class="bubble">
						<circle cx="416" cy="181" r="12.500"/><circle cx="625" cy="181" r="12.500"/><circle cx="832.500" cy="181" r="12.500"/><circle cx="1041" cy="181" r="12.500"/><circle cx="1249" cy="181" r="12.500"/>
						<circle cx="203" cy="274.500" r="12.500"/><circle cx="203" cy="443.500" r="12.500"/><circle cx="744" cy="274.500" r="12.500"/><circle cx="744" cy="443.500" r="12.500"/>
					</g>
					<g class="bubble-text">
						<text x="416" y="186">5</text><text x="625" y="186">6</text><text x="833" y="186">7</text><text x="1041" y="186" fill="#77598f">8</text><text x="1249" y="186">2</text>
						<text x="203" y="280">C</text><text x="203" y="449">B</text><text x="744" y="280">C</text><text x="744" y="449" fill="#666">B</text>
					</g>
					<g class="dim-text">
						<text transform="translate(594 184) rotate(-36)">1000</text>
						<text transform="translate(447 466) rotate(36)">1000</text>
						<text transform="translate(889 303) rotate(-90)">13600</text>
						<text transform="translate(983 358) rotate(-90)" fill="#6a5890">2680</text>
						<text transform="translate(983 467) rotate(-90)" fill="#6a5890">0</text>
					</g>

					<path d="M243 424v-41h-2l4-10 4 10h-2v41z" fill="#0f0"/>
					<path d="M245 421h38v-3l12 5-12 5v-3h-38z" fill="#f00"/>
					<path d="M254 377l5 4 5-4M259 381v5" fill="none" stroke="#0c0"/>
					<path d="M282 402l9 9M291 402l-9 9" stroke="#d00"/>
				</svg>

				<div class="bar-row row-snap">
					<div class="band">
						<i class="grip"></i>
						<button><svg class="i"><use href="#ortho"/></svg>正交</button>
						<button class="active"><svg class="i"><use href="#osnap"/></svg>对象捕捉</button>
						<button><svg class="i"><use href="#dyn"/></svg>动态输入</button>
					</div>
					<div class="band points">
						<i class="grip"></i>
						<button><svg class="i"><use href="#cross"/></svg>交点</button>
						<button class="active"><svg class="i"><use href="#perp"/></svg>垂点</button>
						<button class="active"><svg class="i"><use href="#mid"/></svg>中点</button>
						<button><svg class="i"><use href="#vertex"/></svg>顶点</button>
						<button><svg class="i"><use href="#coord"/></svg>坐标</button>
					</div>
					<div class="band">
						<i class="grip"></i>
						<select class="w-floor" aria-label="偏移方式"><option>不偏移</option></select>
						<i class="sep near"></i>
						<label class="num">X=<span class="spin"><input type="text" value="0"><svg width="8" height="16"><path d="M4 1l3 3H1zM4 15l3-3H1z" fill="#666"/></svg></span>mm</label>
						<label class="num">Y=<span class="spin"><input type="text" value="0"><svg width="8" height="16"><path d="M4 1l3 3H1zM4 15l3-3H1z" fill="#666"/></svg></span>mm</label>
						<i class="sep near"></i>
						<label class="check"><input type="checkbox">旋转</label>
						<label class="num"><span class="spin wide"><input type="text" value="0.000" aria-label="旋转角度"><svg width="8" height="16"><path d="M4 1l3 3H1zM4 15l3-3H1z" fill="#666"/></svg></span>°</label>
					</div>
				</div>

				<section class="detail">
					<div class="handle">
						<svg width="10" height="10"><path d="M.5 .5h9v9h-9z" fill="#e8dede" stroke="#444"/><path d="M2 3l6 6M8 3L2 9" stroke="#222"/><path d="M0 1h10" stroke="#a03030" stroke-width="2"/></svg>
						<div class="dots"></div>
					</div>
					<div class="detail-body">
						<div class="band detail-bar">
							<button class="off" aria-label="首行"><svg class="i"><use href="#first"/></svg></button>
							<button class="off" aria-label="上一行"><svg class="i"><use href="#prev"/></svg></button>
							<button class="off" aria-label="下一行"><svg class="i"><use href="#next"/></svg></button>
							<button class="off" aria-label="末行"><svg class="i"><use href="#last"/></svg></button>
							<i class="sep"></i>
							<button class="off" aria-label="上移"><svg class="i"><use href="#up"/></svg></button>
							<button class="off" aria-label="下移"><svg class="i"><use href="#down"/></svg></button>
							<i class="sep"></i>
							<button class="off"><svg class="i"><use href="#insrow"/></svg>插入</button>
							<button class="off"><svg class="i"><use href="#delrow"/></svg>删除</button>
							<button class="off"><svg class="i"><use href="#scale"/></svg>缩尺配筋</button>
							<button class="off"><svg class="i"><use href="#info"/></svg>钢筋信息</button>
							<button class="off"><svg class="i"><use href="#lib"/></svg>钢筋图库</button>
							<button class="drop tight"><svg class="i"><use href="#other"/></svg>其他</button>
							<button>关闭</button>
							<i class="sep"></i>
							<span class="total">单构件钢筋总重(kg)：0</span>
						</div>
						<div class="grid-box">
							<table>
								<colgroup>
									<col class="c33"><col class="c73"><col class="c56"><col class="c36"><col class="c33"><col class="c201"><col class="c166"><col class="c156"><col class="c61"><col class="c38"><col class="c39"><col class="c49"><col class="c61"><col class="c61"><col class="c71"><col class="c61">
								</colgroup>
								<thead>
									<tr><th></th><th class="hot">筋号</th><th>直径(mm)</th><th>级别</th><th>图号</th><th>图形</th><th>计算公式</th><th>公式描述</th><th>长度(mm)</th><th>根数</th><th>搭接</th><th>损耗(%)</th><th>单重(kg)</th><th>总重(kg)</th><th>钢筋归类</th><th>搭接形式</th></tr>
								</thead>
								<tbody>
									<tr><th class="rowhead">1*</th><td class="editing"></td><td></td><td></td><td></td><td></td><td></td><td></td><td></td><td></td><td></td><td></td><td></td><td></td><td></td><td></td></tr>
								</tbody>
							</table>
							<div class="hscroll">
								<svg width="6" height="9"><path d="M5.500 0L1 4.500 5.500 9" fill="none" stroke="#444" stroke-width="1.500"/></svg>
								<div class="track"><div class="thumb"></div></div>
								<svg width="6" height="9"><path d="M.5 0L5 4.500 .5 9" fill="none" stroke="#444" stroke-width="1.500"/></svg>
							</div>
						</div>
					</div>
				</section>
			</main>
		</div>

		<footer class="status">
			<span class="s-xy">X=148520 Y=10884</span>
			<span class="s-floor">层高:3.47m</span>
			<span class="s-base">底标高:-3.5m</span>
			<span class="s-count">0</span>
			<span class="s-hint">按鼠标左键指定第一个角点，或拾取构件图元</span>
			<div class="ime">
				<svg width="28" height="28"><use href="#sogou"/></svg>
				<b>英</b>
				<svg width="16" height="16"><circle cx="4" cy="5" r="2" fill="#1b72c8"/><path d="M9 8h3q0 3-3 4" fill="none" stroke="#1b72c8" stroke-width="1.800"/></svg>
				<svg width="16" height="16"><rect x="5" y="0" width="6" height="10" rx="3" fill="#1b72c8"/><path d="M2.500 6q0 6 5.500 6t5.500-6M8 12v3M5 15.200h6" fill="none" stroke="#1b72c8" stroke-width="1.500"/></svg>
				<svg width="16" height="16"><rect x="0" y="2" width="16" height="12" rx="2" fill="#1b72c8"/><path d="M2 5h12M2 8h12" stroke="#fff" stroke-width="1.500" stroke-dasharray="2 1"/><path d="M4 11.500h8" stroke="#fff" stroke-width="1.500"/></svg>
				<svg width="16" height="16"><circle cx="6" cy="4" r="3.500" fill="#b9c3d6"/><path d="M0 14q0-6 6-6t6 6z" fill="#b9c3d6"/><text x="6" y="15" font-size="8" fill="#8a96ad">17</text></svg>
				<svg width="16" height="16"><path d="M0 4l5-3q3 2 6 0l5 3-2 4-2-1v8H4V7L2 8z" fill="#1b72c8"/></svg>
				<svg width="16" height="16"><path d="M2 14l7-7" stroke="#1b72c8" stroke-width="3" stroke-linecap="round"/><path d="M14 2l-3 3M15 4q0 5-5 5-4-2-2-6 2-3 5-2l-3 3 2 2z" fill="#1b72c8"/></svg>
			</div>
		</footer>

		<div class="taskbar">
			<button class="start" aria-label="开始"><svg width="16" height="16"><use href="#win"/></svg></button>
			<label class="search">
				<svg width="22" height="22"><circle cx="11" cy="11" r="9" fill="none" stroke="#fff" stroke-width="3"/></svg>
				<input type="text" placeholder="在这里输入你要搜索的内容">
				<svg width="12" height="18"><rect x="3.500" y=".5" width="5" height="11" rx="1" fill="none" stroke="#aaa"/><path d="M.5 8v5.500h11V8M6 14v3M3 17h6" fill="none" stroke="#aaa"/></svg>
			</label>
			<div class="apps">
				<button aria-label="应用"><svg class="a"><use href="#petals"/></svg></button>
				<button aria-label="广联达"><svg class="a"><use href="#gline"/></svg></button>
				<button class="gap" aria-label="Edge"><svg class="a"><use href="#edge"/></svg></button>
				<button aria-label="应用商店"><svg class="a"><use href="#store"/></svg></button>
				<button class="open" aria-label="文件资源管理器"><svg class="a"><use href="#explorer"/></svg></button>
				<button class="open" aria-label="广联达云"><svg class="a"><use href="#gblue"/></svg></button>
				<button class="front" aria-label="GGJ2013"><svg class="a"><use href="#logo"/></svg></button>
				<button class="open" aria-label="浏览器"><svg class="a"><use href="#egreen"/></svg></button>
				<button class="open" aria-label="便笺"><svg class="a"><use href="#notes"/></svg></button>
			</div>
			<div class="cpu">57%<br>CPU使用</div>
			<div class="tray">
				<svg width="16" height="16"><path d="M2 11l6-6 6 6" fill="none" stroke="#fff" stroke-width="1.200"/></svg>
				<svg width="16" height="16"><path d="M5.500 5.500h9v6h-9zM15.500 7v3M3 1v3M0 3.500h5v3l-2 1.500v2h2" fill="none" stroke="#fff"/><path d="M7 7h6v3H7z" fill="#fff"/></svg>
				<svg width="16" height="16"><path d="M1.500 15Q2 3 15 2.500M4.500 15Q5 6.500 15 5.500M8 15q0-5 7-6M11 15q0-3 4-3" fill="none" stroke="#ddd" stroke-width="1.200"/><circle cx="13.500" cy="14" r="1.200" fill="#fff"/></svg>
				<svg width="16" height="16"><path d="M.5 5.500h3l4-3.500v12l-4-3.500h-3zM9.500 6q2 2 0 4" fill="none" stroke="#fff"/><path d="M11.500 4q3 4 0 8M13.500 2q4 6 0 12" fill="none" stroke="#888"/></svg>
				<span>中</span>
				<svg width="16" height="16"><use href="#sogou"/></svg>
			</div>
			<div class="clock">18:23<br>2017/8/25</div>
			<button class="notice" aria-label="通知"><svg width="24" height="26"><path d="M0 1h17v13H9l-4 4v-4H0z" fill="#fff"/><path d="M3 4.500h11M3 7.500h11M3 10.500h11" stroke="#000"/><circle cx="16" cy="17" r="8" fill="#333" stroke="#999"/><text x="16" y="22" font-size="13" font-weight="bold" fill="#fff" text-anchor="middle">2</text></svg></button>
		</div>
	</body>
</html>
```

FILE: styles.css
```css
* {
	box-sizing: border-box;
}

body {
	margin: 0;
	height: 100vh;
	display: flex;
	flex-direction: column;
	overflow: hidden;
	background: #f0f0f0;
	color: #000;
	font-family: "Open Sans", "Noto Sans CJK SC", sans-serif;
	font-size: 12px;
	line-height: 16px;
}

button, input, select {
	margin: 0;
	padding: 0;
	border: 0;
	background: none;
	font: inherit;
	color: inherit;
}

svg {
	flex: none;
	display: block;
}

.sprite {
	position: absolute;
	width: 0;
	height: 0;
}

.i {
	width: 16px;
	height: 16px;
}

/* title */

.titlebar {
	display: flex;
	align-items: center;
	flex: none;
	height: 23px;
	padding-left: 2px;
	background: #fff;
}

h1 {
	display: flex;
	align-items: center;
	flex: 1;
	height: 23px;
	margin: 0 0 0 5px;
	font-size: 12px;
	font-weight: normal;
	white-space: nowrap;
}

.title-start {
	min-width: 377px;
}

.ball {
	align-self: flex-start;
	width: 45px;
	height: 45px;
	margin: -26px -2px 0 0;
	padding-top: 22px;
	border: 2px solid #eee;
	border-radius: 50%;
	background: #3cb55a;
	box-shadow: 0 1px 4px #777;
	color: #fff;
	font-weight: bold;
	line-height: 20px;
	text-align: center;
	z-index: 2;
}

.win-buttons {
	display: flex;
}

.win-buttons button {
	display: flex;
	align-items: center;
	justify-content: center;
	width: 46px;
	height: 22px;
}

/* toolbars */

.account-row {
	display: flex;
	justify-content: flex-end;
	flex: none;
	gap: 3px;
	height: 31px;
	padding: 1px 2px 2px 0;
}

.tip {
	justify-content: center;
	width: 186px;
}

.tip a {
	color: #2f6600;
	text-decoration: none;
}

.account {
	width: 238px;
	padding-left: 1px;
}

.bar-row {
	display: flex;
	flex: none;
}

.band {
	display: flex;
	align-items: center;
	flex: none;
	border-radius: 3px;
	background: linear-gradient(#fcfcfc, #f0f0f0);
}

.grow {
	flex: 1;
	min-width: 0;
}

.band button {
	display: flex;
	align-items: center;
	flex: none;
	gap: 4px;
	height: 24px;
	padding: 0 4px 0 3px;
	white-space: nowrap;
}

.band .active {
	background: #dfebf6;
	outline: 1px solid #0078d7;
	outline-offset: -1px;
}

.band .off {
	color: #8c8c8c;
}

.drop::after {
	content: "";
	margin: 0 1px;
	border: 3px solid transparent;
	border-top: 4px solid #000;
	border-bottom: 0;
}

.band .tight {
	gap: 3px;
}

.off.drop::after {
	border-top-color: #888;
}

.band .only {
	padding: 0 2px 0 0;
}

.sep {
	flex: none;
	width: 1px;
	height: 18px;
	margin: 0 1px 0 4px;
	background: #b8b8b8;
}

.near {
	margin-left: 2px;
}

.grip {
	flex: none;
	width: 2px;
	height: 16px;
	margin: 0 2px 0 3px;
	background: repeating-linear-gradient(#bbb 0 2px, transparent 2px 4px);
}

.more {
	align-self: flex-start;
	margin: 0 4px 0 auto;
	font-size: 14px;
	font-weight: bold;
	line-height: 12px;
}

select {
	appearance: none;
	flex: none;
	height: 24px;
	margin-right: 3px;
	padding: 0 14px 0 1px;
	background-color: #fff;
	background-image: conic-gradient(from -45deg at 50% 4px, #000 90deg, transparent 0);
	background-size: 7px 4px;
	background-position: right 4px center;
	background-repeat: no-repeat;
}

.w-floor {
	width: 57px;
	margin-left: 2px;
}

.w-kind {
	width: 69px;
}

.w-arc {
	width: 57px;
}

.combo {
	display: flex;
	align-items: center;
	flex: none;
	width: 61px;
	margin: 0 2px 0 1px;
	padding-left: 2px;
	background: #fff;
}

.combo select {
	width: 42px;
	margin: 0;
	padding-left: 3px;
	background-position: right 1px center;
}

.main-bars {
	gap: 2px;
	height: 30px;
	padding: 0 2px 2px 1px;
}

.band-file {
	width: 150px;
	padding-left: 1px;
}

.band-calc {
	width: 549px;
	padding-left: 1px;
}

/* module navigation */

.work {
	display: flex;
	flex: 1;
	min-height: 0;
}

.modules {
	display: flex;
	flex-direction: column;
	flex: none;
	width: 186px;
	margin-right: 4px;
	padding: 0 1px 1px 0;
	font-family: "Liberation Serif", "Noto Sans CJK SC", serif;
}

.modules h2 {
	display: flex;
	align-items: center;
	gap: 14px;
	flex: none;
	height: 16px;
	margin: 0 0 1px;
	padding-right: 4px;
	background: #0054e3;
	color: #fff;
	font-size: 12px;
	font-weight: normal;
}

.modules h2 svg:first-of-type {
	margin-left: auto;
}

.modules > button {
	flex: none;
	height: 22px;
	border: 1px solid #a0a0a0;
	border-top-color: #fff;
	background: #f0f0f0;
}

.modules h2 + button {
	border-top-color: #a0a0a0;
}

.tree-tools {
	flex: none;
	height: 27px;
	padding: 6px 7px;
	border: 1px solid #a0a0a0;
	border-width: 0 1px;
	background: linear-gradient(#fcfcfc, #ececec);
}

.tree-box {
	display: flex;
	flex: 1;
	min-height: 0;
	margin: 0 0 1px 2px;
	padding: 1px 1px 0 0;
	border: 1px solid #828790;
	background: #fff;
}

.tree {
	flex: 1;
	min-height: 0;
	overflow: hidden;
}

.tree, .tree ul {
	margin: 0;
	padding: 0;
	list-style: none;
}

.tree > li {
	margin-left: 12px;
	border-left: 1px dotted #888;
}

.tree ul {
	margin-left: 18px;
	border-left: 1px dotted #888;
}

.tree ul li {
	display: flex;
	align-items: center;
	gap: 4px;
	height: 16px;
	white-space: nowrap;
}

.tree ul li::before {
	content: "";
	width: 10px;
	margin-right: -4px;
	border-top: 1px dotted #888;
}

.current {
	display: flex;
	gap: 4px;
	margin-left: -1px;
	padding: 0 5px 0 1px;
	background: #d9d9d9;
}

.group {
	display: flex;
	align-items: center;
	gap: 4px;
	height: 16px;
	margin-left: -6px;
}

.chev {
	margin-right: 3px;
	background: #fff;
}

.vscroll {
	display: flex;
	flex-direction: column;
	align-items: center;
	width: 16px;
	padding: 6px 0;
	background: #f0f0f0;
}

.vscroll .track {
	display: flex;
	flex-direction: column;
	justify-content: flex-end;
	flex: 1;
	width: 16px;
	padding-bottom: 72px;
}

.vscroll .thumb {
	height: 225px;
	background: #cdcdcd;
}

/* work area */

main {
	display: flex;
	flex-direction: column;
	flex: 1;
	min-width: 0;
}

.row-edit {
	height: 27px;
	padding: 0 0 1px 1px;
}

.row-member {
	height: 28px;
	padding: 0 0 1px 1px;
}

.row-draw {
	height: 29px;
	padding: 0 0 1px 1px;
}

.axis {
	margin-left: 76px;
}

.stub {
	width: 34px;
	margin-left: 1px;
	background: #fafafa;
}

.canvas {
	width: 100%;
	height: 305px;
}

.crisp {
	shape-rendering: crispEdges;
}

.aux {
	stroke: #800000;
}

.dimline {
	stroke: #008000;
}

.axis-line {
	stroke: #f00;
}

.bubble {
	fill: none;
	stroke: #008000;
}

.bubble-text, .dim-text {
	font-family: Roboto, sans-serif;
	font-size: 16px;
	text-anchor: middle;
	fill: #c8c8c8;
}

.bubble-text {
	font-weight: bold;
}

.row-snap {
	gap: 3px;
	height: 31px;
	padding: 1px 0 2px 1px;
}

.points {
	margin-left: 1px;
}

.num {
	display: flex;
	align-items: center;
	gap: 2px;
	margin-right: 3px;
	color: #777;
}

.spin {
	display: flex;
	align-items: center;
	width: 58px;
	height: 23px;
	padding-right: 4px;
	border: 1px solid #777;
}

.spin input {
	flex: 1;
	width: 20px;
	padding-right: 6px;
	text-align: right;
}

.wide {
	width: 68px;
}

.check {
	display: flex;
	align-items: center;
	gap: 8px;
	margin: 0 2px;
}

.check input {
	appearance: none;
	width: 12px;
	height: 12px;
	border: 1px solid #999;
	background: #f8f8f8;
}

/* rebar table */

.detail {
	display: flex;
	flex: 1;
	min-height: 0;
}

.handle {
	display: flex;
	flex-direction: column;
	gap: 2px;
	width: 12px;
	padding: 3px 1px 2px;
}

.dots {
	flex: 1;
	background: radial-gradient(circle at 2px 2px, #bbb 1px, transparent 2px);
	background-size: 5px 5px;
}

.detail-body {
	display: flex;
	flex-direction: column;
	flex: 1;
	min-width: 0;
	padding: 3px 2px 2px 0;
}

.detail-bar {
	height: 26px;
}

.total {
	margin-left: 6px;
}

.grid-box {
	display: flex;
	flex-direction: column;
	justify-content: space-between;
	flex: 1;
	overflow: hidden;
	border: 1px solid #a0a0a0;
	background: #fff;
}

table {
	table-layout: fixed;
	width: 1195px;
	border-collapse: collapse;
	font-family: "Liberation Serif", "Noto Sans CJK SC", serif;
}

th, td {
	height: 19px;
	padding: 0;
	border: 1px solid #c0c0c0;
	border-width: 0 1px 1px 0;
	font-weight: normal;
	white-space: nowrap;
	overflow: hidden;
}

th {
	background: linear-gradient(#fff, #f0f0f0);
}

.hot {
	background: linear-gradient(#fbdca0, #f2c063);
	color: #5a0050;
}

.rowhead {
	background: #ffd58c;
	color: #5a0050;
}

.editing {
	border-right-color: #000;
	background: #d9eaf8;
}

.c33 { width: 33px; }
.c36 { width: 36px; }
.c38 { width: 38px; }
.c39 { width: 39px; }
.c49 { width: 49px; }
.c56 { width: 56px; }
.c61 { width: 61px; }
.c71 { width: 71px; }
.c73 { width: 73px; }
.c156 { width: 156px; }
.c166 { width: 166px; }
.c201 { width: 201px; }

.hscroll {
	display: flex;
	align-items: center;
	gap: 8px;
	height: 16px;
	padding: 0 5px;
	background: #f0f0f0;
}

.hscroll .track {
	flex: 1;
}

.hscroll .thumb {
	width: 72%;
	height: 16px;
	background: #cdcdcd;
}

/* status bar */

.status {
	position: relative;
	display: flex;
	gap: 2px;
	flex: none;
	height: 22px;
	padding-top: 2px;
	border-top: 1px solid #fff;
	font-family: "Liberation Serif", "Noto Sans CJK SC", serif;
}

.status > span {
	padding: 0 1px;
	border: 1px solid #d5d5d5;
	background: linear-gradient(#fff, #f0f0f0);
}

.s-xy { width: 148px; }
.s-floor { width: 78px; }
.s-base { width: 98px; }
.s-count { width: 48px; }
.s-hint { flex: 1; }

.ime {
	position: absolute;
	right: 0;
	bottom: 0;
	display: flex;
	align-items: center;
	gap: 6px;
	width: 185px;
	height: 24px;
	padding-right: 4px;
	border-top: 1px solid #c3d3e3;
	background: #fff;
	color: #1b72c8;
}

.ime b {
	font-size: 14px;
}

/* taskbar */

.taskbar {
	display: flex;
	flex: none;
	height: 40px;
	background: #000c10;
	color: #fff;
}

.taskbar button {
	display: flex;
	align-items: center;
	justify-content: center;
}

.start {
	width: 48px;
	background: #000;
}

.search {
	display: flex;
	align-items: center;
	width: 344px;
	padding: 0 14px 0 9px;
	background: #333;
}

.search input {
	flex: 1;
	padding-left: 5px;
	font-size: 14px;
}

.search input::placeholder {
	color: #999;
}

.apps {
	display: flex;
	margin-left: 2px;
}

.apps button {
	width: 49px;
	border: solid transparent;
	border-width: 2px 4px 0;
}

.apps .gap {
	margin-left: 4px;
}

.apps .open {
	background: linear-gradient(#76b9ed, #76b9ed) bottom / 100% 2px no-repeat padding-box;
}

.apps .front {
	background: linear-gradient(#76b9ed, #76b9ed) bottom / 100% 2px no-repeat, #333c40;
	border-width: 2px 0 0;
}

.a {
	width: 24px;
	height: 24px;
}

.cpu, .clock {
	width: 76px;
	padding-top: 2px;
	line-height: 18px;
	text-align: center;
}

.cpu {
	margin-left: auto;
}

.tray {
	display: flex;
	align-items: center;
	gap: 9px;
	padding: 0 8px 0 4px;
}

.tray span {
	font-size: 14px;
}

.notice {
	width: 50px;
	margin-right: 2px;
}
```
